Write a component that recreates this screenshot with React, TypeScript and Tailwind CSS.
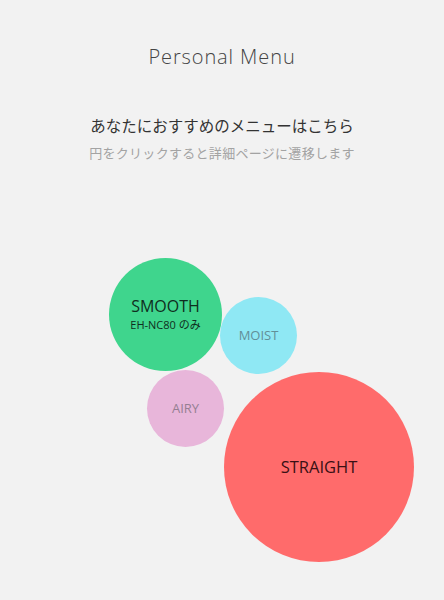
export default function App() {
  return (
    <div className="min-h-[600px] w-[444px] bg-[#f2f2f2] font-['Open_Sans','Noto_Sans_CJK_JP',sans-serif] flex flex-col items-center">
      <h1 className="mt-[43px] h-[28px] leading-[28px] text-[20px] font-light tracking-[0.9px] text-[#444]">
        Personal Menu
      </h1>
      <p className="mt-[42px] h-[24px] leading-[24px] text-[15.5px] text-[#333] font-['Noto_Sans_CJK_JP',sans-serif]">
        あなたにおすすめのメニューはこちら
      </p>
      <p className="mt-[6px] h-[20px] leading-[20px] text-[13px] tracking-[0.3px] text-[#a3a3a3] font-['Noto_Sans_CJK_JP',sans-serif]">
        円をクリックすると詳細ページに遷移します
      </p>
      <div className="relative w-full h-[435px]">
        <div className="absolute left-[109px] top-[95px] w-[113px] h-[113px] rounded-full bg-[#3fd58d] flex flex-col items-center justify-center text-[#0f2e20]">
          <span className="text-[16px] leading-[20px]">SMOOTH</span>
          <span className="text-[11px] leading-[16px] mt-[1px] font-['Open_Sans','Noto_Sans_CJK_JP',sans-serif]">EH-NC80 のみ</span>
        </div>
        <div className="absolute left-[220px] top-[134px] w-[77px] h-[77px] rounded-full bg-[#8fe8f4] flex items-center justify-center text-[13px] text-[#628f98]">
          MOIST
        </div>
        <div className="absolute left-[147px] top-[207px] w-[77px] h-[77px] rounded-full bg-[#e8b6da] flex items-center justify-center text-[13px] text-[#957f92]">
          AIRY
        </div>
        <div className="absolute left-[224px] top-[209px] w-[190px] h-[190px] rounded-full bg-[#ff6b6b] flex items-center justify-center text-[16.5px] text-[#3a1014]">
          STRAIGHT
        </div>
      </div>
    </div>
  );
}
